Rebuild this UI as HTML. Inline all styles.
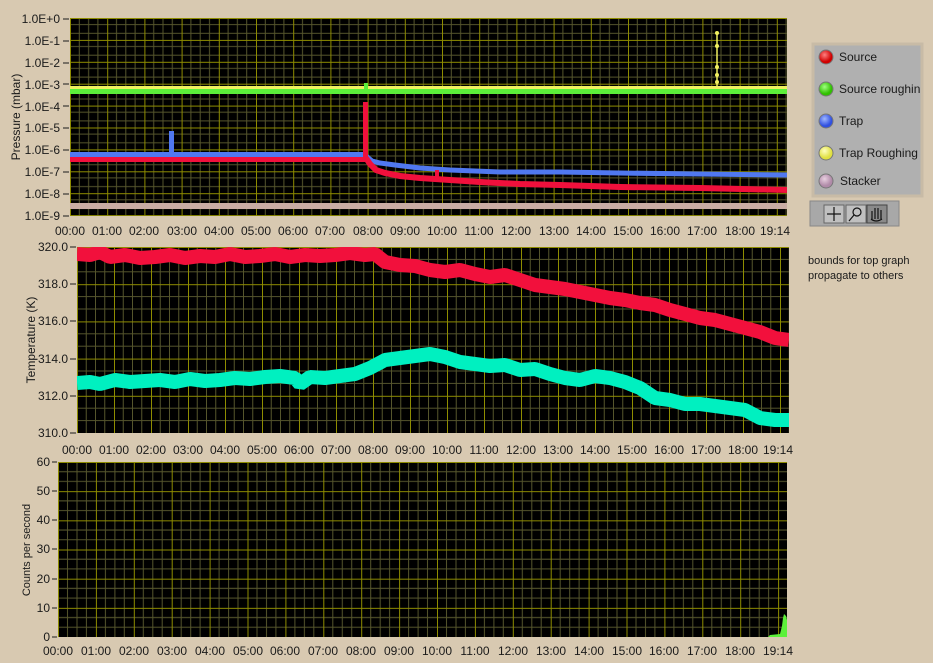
<!DOCTYPE html>
<html><head><meta charset="utf-8"><style>
html,body{margin:0;padding:0;background:#d8c9b1;width:933px;height:663px;overflow:hidden}
svg{display:block}
text{font-family:"Liberation Sans",sans-serif;fill:#1a1a1a}
</style></head><body>
<svg width="933" height="663" viewBox="0 0 933 663" xmlns="http://www.w3.org/2000/svg">
<defs>
<pattern id="g1" patternUnits="userSpaceOnUse" x="70" y="18" width="37.2" height="21.9">
<rect width="37.2" height="21.9" fill="#000"/>
<g stroke="#55552c" stroke-width="1"><line x1="9.3" y1="0" x2="9.3" y2="22"/><line x1="18.6" y1="0" x2="18.6" y2="22"/><line x1="27.9" y1="0" x2="27.9" y2="22"/><line x1="0" y1="6.6" x2="38" y2="6.6"/><line x1="0" y1="15.3" x2="38" y2="15.3"/></g>
<g stroke="#8e8c00" stroke-width="1"><line x1="0.5" y1="0" x2="0.5" y2="22"/><line x1="0" y1="0.5" x2="38" y2="0.5"/></g>
</pattern>
<pattern id="g2" patternUnits="userSpaceOnUse" x="77" y="247" width="37" height="37.2">
<rect width="37" height="37.2" fill="#000"/>
<g stroke="#55552c" stroke-width="1"><line x1="9.25" y1="0" x2="9.25" y2="38"/><line x1="18.5" y1="0" x2="18.5" y2="38"/><line x1="27.75" y1="0" x2="27.75" y2="38"/><line x1="0" y1="12.4" x2="37" y2="12.4"/><line x1="0" y1="24.8" x2="37" y2="24.8"/></g>
<g stroke="#8e8c00" stroke-width="1"><line x1="0.5" y1="0" x2="0.5" y2="38"/><line x1="0" y1="0.5" x2="37" y2="0.5"/></g>
</pattern>
<pattern id="g3" patternUnits="userSpaceOnUse" x="58" y="462" width="37.9" height="29.17">
<rect width="37.9" height="29.17" fill="#000"/>
<g stroke="#55552c" stroke-width="1"><line x1="9.5" y1="0" x2="9.5" y2="30"/><line x1="19" y1="0" x2="19" y2="30"/><line x1="28.4" y1="0" x2="28.4" y2="30"/><line x1="0" y1="9.7" x2="38" y2="9.7"/><line x1="0" y1="19.4" x2="38" y2="19.4"/></g>
<g stroke="#8e8c00" stroke-width="1"><line x1="0.5" y1="0" x2="0.5" y2="30"/><line x1="0" y1="0.5" x2="38" y2="0.5"/></g>
</pattern>
<radialGradient id="lr" cx="40%" cy="35%"><stop offset="0" stop-color="#ff8080"/><stop offset="1" stop-color="#d00000"/></radialGradient>
<radialGradient id="lg" cx="40%" cy="35%"><stop offset="0" stop-color="#a0ff80"/><stop offset="1" stop-color="#30c000"/></radialGradient>
<radialGradient id="lb" cx="40%" cy="35%"><stop offset="0" stop-color="#a0b8ff"/><stop offset="1" stop-color="#3050e0"/></radialGradient>
<radialGradient id="ly" cx="40%" cy="35%"><stop offset="0" stop-color="#ffffc0"/><stop offset="1" stop-color="#e0e040"/></radialGradient>
<radialGradient id="lp" cx="40%" cy="35%"><stop offset="0" stop-color="#e8d0e0"/><stop offset="1" stop-color="#b08aa8"/></radialGradient>
</defs>

<rect x="70" y="18" width="717" height="198" fill="url(#g1)"/>
<clipPath id="c1"><rect x="70" y="18" width="717" height="198"/></clipPath>
<g clip-path="url(#c1)">
<rect x="70" y="86" width="717" height="3" fill="#f0f060"/>
<rect x="70" y="89" width="717" height="5" fill="#5cf03a"/>
<rect x="70" y="203" width="717" height="6" fill="#c9ada4"/>
<rect x="70" y="152" width="295" height="5" fill="#5078f0"/>
<rect x="169" y="131" width="5" height="22" fill="#5078f0"/>
<polyline fill="none" stroke="#5078f0" stroke-width="5" points="365,155 372,161 380,163 395,165 420,168 450,170 500,172 560,172 620,173 700,174 787,175"/>
<rect x="70" y="157" width="295" height="5" fill="#f0103c"/>
<rect x="363" y="102" width="5" height="60" fill="#f0103c"/>
<polyline fill="none" stroke="#f0103c" stroke-width="6" points="366,158 370,164 376,170 385,173 400,176 420,178 450,180 480,182 520,184 560,185 620,187 700,188 787,190"/>
<rect x="435" y="170" width="4" height="8" fill="#f0103c"/>
<rect x="364" y="83" width="4" height="6" fill="#5cf03a"/>
<line x1="717" y1="33" x2="717" y2="86" stroke="#f0f060" stroke-width="1.5"/>
<g fill="#f0f060"><circle cx="717" cy="33" r="2"/><circle cx="717" cy="46" r="2"/><circle cx="717" cy="67" r="2"/><circle cx="717" cy="75" r="2"/><circle cx="717" cy="82" r="2"/></g>
</g>
<g font-size="12" text-anchor="end">
<text x="60" y="23">1.0E+0</text><text x="60" y="45">1.0E-1</text><text x="60" y="67">1.0E-2</text><text x="60" y="89">1.0E-3</text><text x="60" y="111">1.0E-4</text><text x="60" y="132">1.0E-5</text><text x="60" y="154">1.0E-6</text><text x="60" y="176">1.0E-7</text><text x="60" y="198">1.0E-8</text><text x="60" y="220">1.0E-9</text>
</g>
<g stroke="#1a1a1a"><line x1="63" y1="19" x2="69" y2="19"/><line x1="63" y1="41" x2="69" y2="41"/><line x1="63" y1="63" x2="69" y2="63"/><line x1="63" y1="84" x2="69" y2="84"/><line x1="63" y1="106" x2="69" y2="106"/><line x1="63" y1="128" x2="69" y2="128"/><line x1="63" y1="150" x2="69" y2="150"/><line x1="63" y1="172" x2="69" y2="172"/><line x1="63" y1="194" x2="69" y2="194"/><line x1="63" y1="216" x2="69" y2="216"/></g>
<text transform="translate(20,117) rotate(-90)" font-size="12" text-anchor="middle">Pressure (mbar)</text>
<g font-size="12" text-anchor="middle">
<text x="70" y="235">00:00</text><text x="107" y="235">01:00</text><text x="144" y="235">02:00</text><text x="182" y="235">03:00</text><text x="219" y="235">04:00</text><text x="256" y="235">05:00</text><text x="293" y="235">06:00</text><text x="330" y="235">07:00</text><text x="368" y="235">08:00</text><text x="405" y="235">09:00</text><text x="442" y="235">10:00</text><text x="479" y="235">11:00</text><text x="516" y="235">12:00</text><text x="554" y="235">13:00</text><text x="591" y="235">14:00</text><text x="628" y="235">15:00</text><text x="665" y="235">16:00</text><text x="702" y="235">17:00</text><text x="740" y="235">18:00</text><text x="775" y="235">19:14</text>
</g>

<rect x="77" y="247" width="712" height="186" fill="url(#g2)"/>
<clipPath id="c2"><rect x="77" y="247" width="712" height="186"/></clipPath>
<g clip-path="url(#c2)" fill="none" stroke-linejoin="bevel">
<polyline stroke="#f2103c" stroke-width="14" points="77,254 90,255 100,252 110,257 125,255 140,258 155,257 170,255 185,258 200,256 215,257 230,254 245,257 260,256 275,254 290,257 305,255 320,256 335,255 350,253 365,255 375,254 385,262 400,265 415,266 430,270 445,272 460,270 475,274 490,277 505,275 520,280 535,285 550,287 565,289 580,292 595,295 610,298 625,300 640,303 655,305 670,310 685,314 700,318 715,320 730,324 745,328 760,332 775,338 789,340"/>
<polyline stroke="#00f0c0" stroke-width="14" points="77,383 90,382 100,384 115,380 130,382 145,381 160,380 175,382 190,379 205,381 220,380 235,378 250,379 265,377 280,376 295,378 300,384 310,377 325,378 340,376 355,374 370,368 385,360 400,358 415,356 430,354 445,357 460,362 475,364 490,366 505,365 520,370 535,369 550,374 565,378 580,380 595,376 610,378 625,382 640,388 655,398 670,400 685,404 700,404 715,406 730,408 745,410 760,418 775,420 789,420"/>
</g>
<g font-size="12" text-anchor="end">
<text x="68" y="251">320.0</text><text x="68" y="288">318.0</text><text x="68" y="325">316.0</text><text x="68" y="363">314.0</text><text x="68" y="400">312.0</text><text x="68" y="437">310.0</text>
</g>
<g stroke="#1a1a1a"><line x1="70" y1="247" x2="76" y2="247"/><line x1="70" y1="284" x2="76" y2="284"/><line x1="70" y1="321" x2="76" y2="321"/><line x1="70" y1="359" x2="76" y2="359"/><line x1="70" y1="396" x2="76" y2="396"/><line x1="70" y1="433" x2="76" y2="433"/></g>
<text transform="translate(35,340) rotate(-90)" font-size="12" text-anchor="middle">Temperature (K)</text>
<g font-size="12" text-anchor="middle">
<text x="77" y="454">00:00</text><text x="114" y="454">01:00</text><text x="151" y="454">02:00</text><text x="188" y="454">03:00</text><text x="225" y="454">04:00</text><text x="262" y="454">05:00</text><text x="299" y="454">06:00</text><text x="336" y="454">07:00</text><text x="373" y="454">08:00</text><text x="410" y="454">09:00</text><text x="447" y="454">10:00</text><text x="484" y="454">11:00</text><text x="521" y="454">12:00</text><text x="558" y="454">13:00</text><text x="595" y="454">14:00</text><text x="632" y="454">15:00</text><text x="669" y="454">16:00</text><text x="706" y="454">17:00</text><text x="743" y="454">18:00</text><text x="778" y="454">19:14</text>
</g>

<rect x="58" y="462" width="729" height="175" fill="url(#g3)"/>
<polygon fill="#5cf03a" points="768,637 770,635 780,634 782,626 783,618 784,614 786,616 787,620 787,637"/>
<g font-size="12" text-anchor="end">
<text x="50" y="466">60</text><text x="50" y="495">50</text><text x="50" y="524">40</text><text x="50" y="553">30</text><text x="50" y="583">20</text><text x="50" y="612">10</text><text x="50" y="641">0</text>
</g>
<g stroke="#1a1a1a"><line x1="52" y1="462" x2="57" y2="462"/><line x1="52" y1="491" x2="57" y2="491"/><line x1="52" y1="520" x2="57" y2="520"/><line x1="52" y1="549" x2="57" y2="549"/><line x1="52" y1="579" x2="57" y2="579"/><line x1="52" y1="608" x2="57" y2="608"/><line x1="52" y1="637" x2="57" y2="637"/></g>
<text transform="translate(30,550) rotate(-90)" font-size="11" text-anchor="middle">Counts per second</text>
<g font-size="12" text-anchor="middle">
<text x="58" y="655">00:00</text><text x="96" y="655">01:00</text><text x="134" y="655">02:00</text><text x="172" y="655">03:00</text><text x="210" y="655">04:00</text><text x="248" y="655">05:00</text><text x="285" y="655">06:00</text><text x="323" y="655">07:00</text><text x="361" y="655">08:00</text><text x="399" y="655">09:00</text><text x="437" y="655">10:00</text><text x="475" y="655">11:00</text><text x="513" y="655">12:00</text><text x="551" y="655">13:00</text><text x="589" y="655">14:00</text><text x="627" y="655">15:00</text><text x="664" y="655">16:00</text><text x="702" y="655">17:00</text><text x="740" y="655">18:00</text><text x="778" y="655">19:14</text>
</g>

<rect x="813" y="44" width="109" height="152" fill="#b0b0b0" stroke="#c8bba6" stroke-width="3"/>
<g stroke="#777" stroke-width="1">
<circle cx="826" cy="57" r="7" fill="url(#lr)"/>
<circle cx="826" cy="89" r="7" fill="url(#lg)"/>
<circle cx="826" cy="121" r="7" fill="url(#lb)"/>
<circle cx="826" cy="153" r="7" fill="url(#ly)"/>
<circle cx="826" cy="181" r="7" fill="url(#lp)"/>
</g>
<g font-size="12">
<text x="839" y="61">Source</text><text x="839" y="93">Source roughin</text><text x="839" y="125">Trap</text><text x="839" y="157">Trap Roughing</text><text x="840" y="185">Stacker</text>
</g>
<rect x="810" y="201" width="89" height="25" fill="#a8a8a8" stroke="#888"/>
<rect x="824" y="205" width="20" height="18" fill="#c0c0c0" stroke="#666"/>
<rect x="846" y="205" width="20" height="18" fill="#c0c0c0" stroke="#666"/>
<rect x="867" y="205" width="20" height="18" fill="#8a8a8a" stroke="#444"/>
<g stroke="#111" stroke-width="1.2" fill="none">
<line x1="827" y1="214" x2="841" y2="214"/><line x1="834" y1="207" x2="834" y2="221"/>
<circle cx="857" cy="212" r="4"/><line x1="854" y1="215" x2="849" y2="221"/>
<path d="M872 219 L872 211 M875 219 L875 208 M878 219 L878 208 M881 219 L881 210 M871 219 Q876 223 882 219"/>
</g>
<g font-size="11"><text x="808" y="264">bounds for top graph</text><text x="808" y="279">propagate to others</text></g>
</svg>
</body></html>
